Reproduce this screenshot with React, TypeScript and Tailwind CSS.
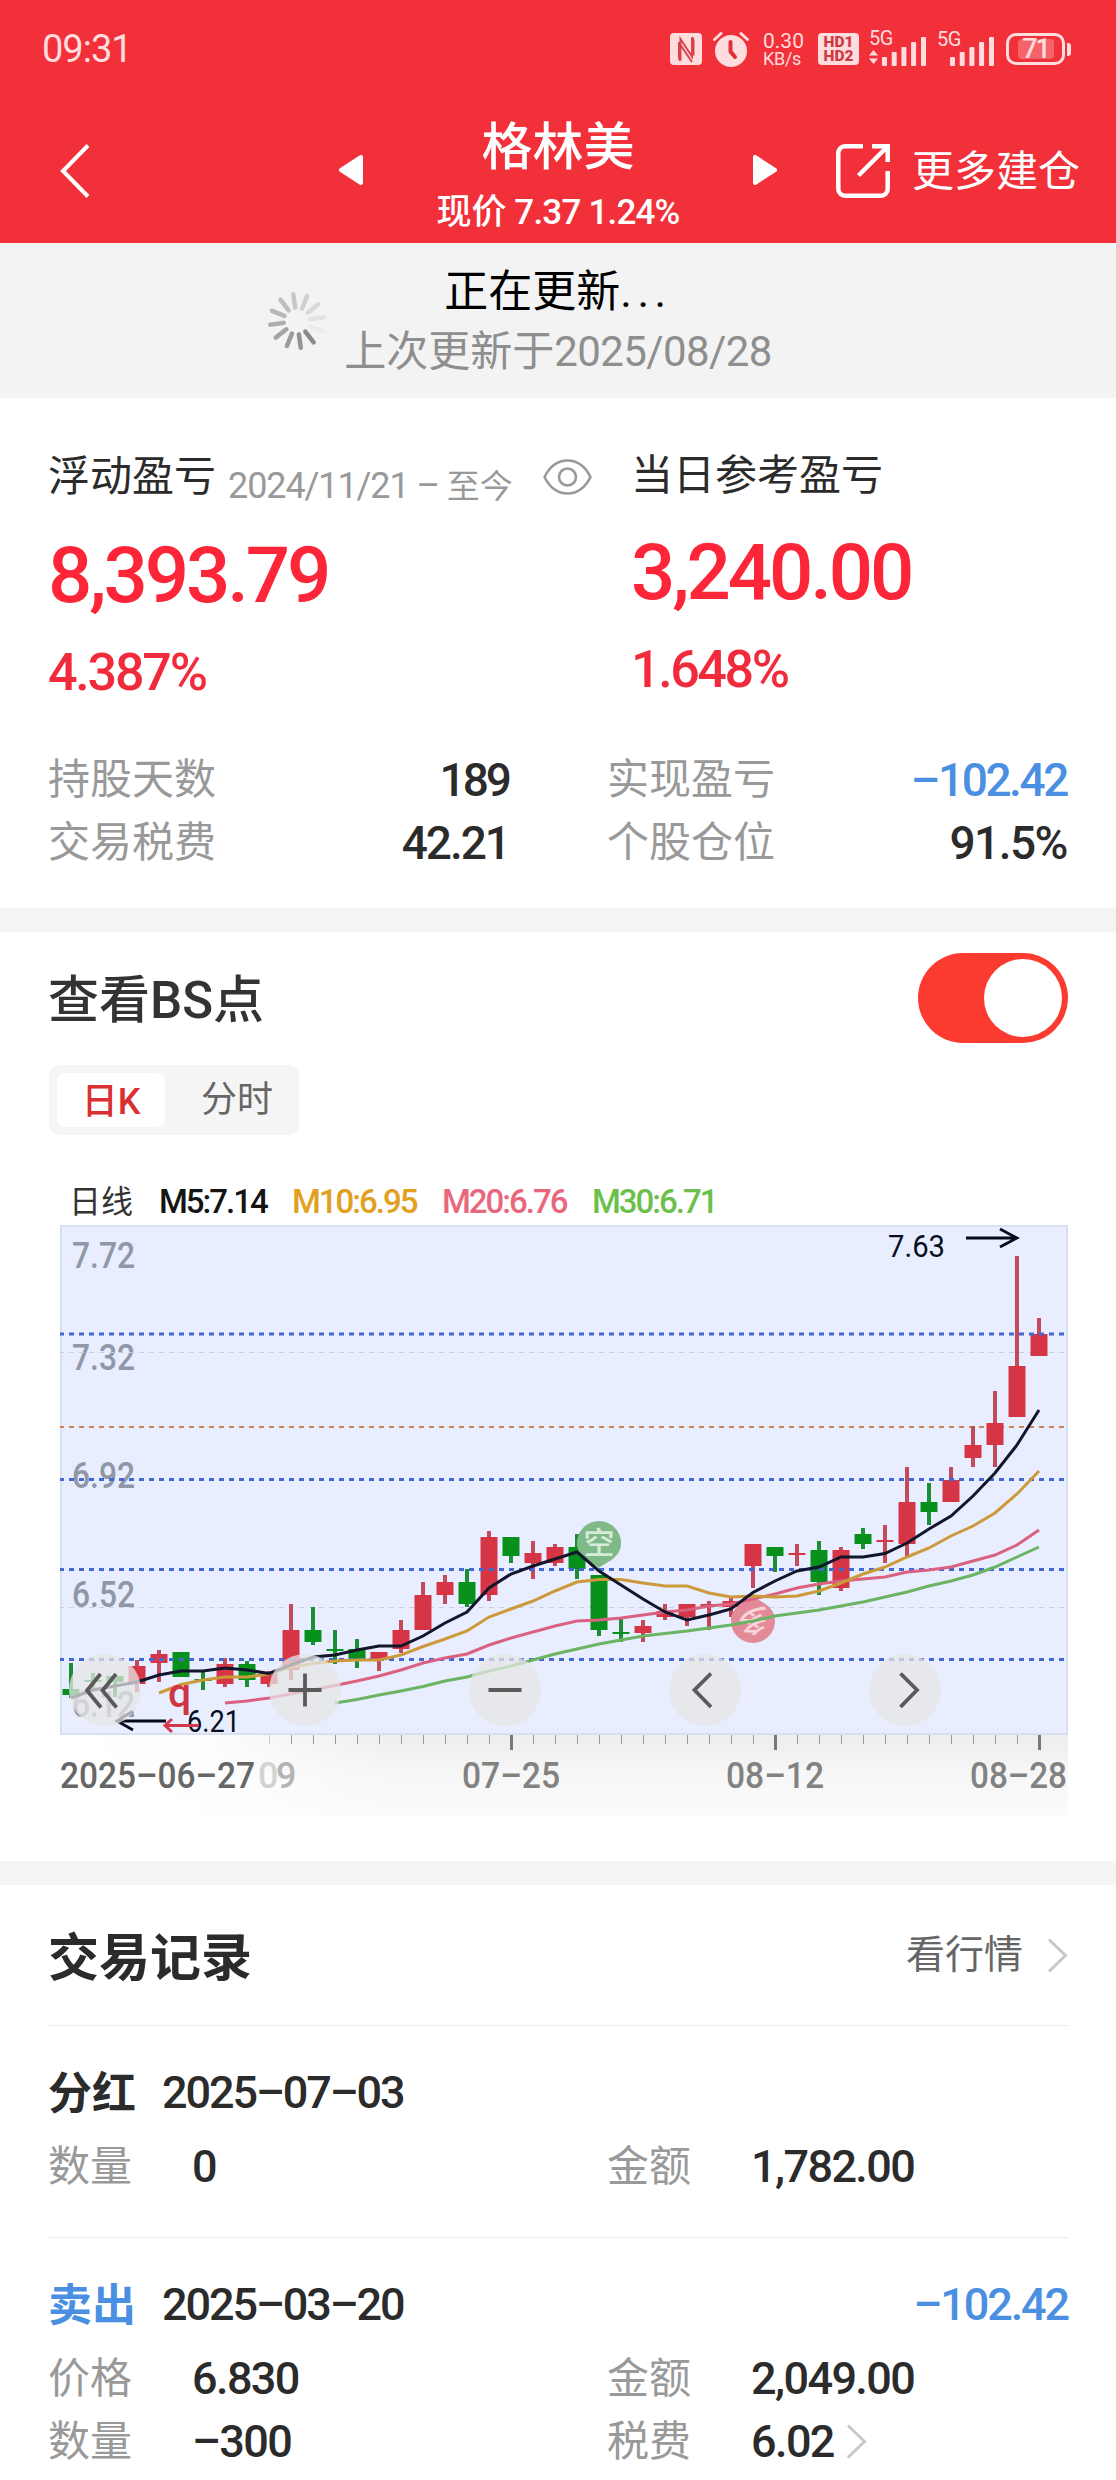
import React, { useState } from "react";
import clsx from "clsx";

type Candle = [number, number, number, number, "r" | "g"];

// x distance between two candles, and x of the first one
const STEP = 22;
const START = 71;

// high, body top, body bottom, low
const candles: Candle[] = [
  [1663, 1689, 1695, 1698, "g"],
  [1673, 1680, 1682, 1689, "g"],
  [1676, 1676, 1682, 1697, "g"],
  [1660, 1666, 1684, 1692, "r"],
  [1650, 1654, 1663, 1682, "r"],
  [1652, 1652, 1677, 1677, "g"],
  [1672, 1679, 1681, 1690, "g"],
  [1658, 1664, 1684, 1687, "r"],
  [1661, 1664, 1680, 1687, "g"],
  [1671, 1672, 1684, 1687, "r"],
  [1604, 1630, 1670, 1680, "r"],
  [1607, 1630, 1642, 1645, "g"],
  [1630, 1649, 1651, 1664, "g"],
  [1639, 1649, 1660, 1668, "g"],
  [1652, 1652, 1660, 1671, "r"],
  [1620, 1630, 1649, 1653, "r"],
  [1582, 1595, 1630, 1630, "r"],
  [1575, 1582, 1595, 1604, "r"],
  [1569, 1582, 1604, 1607, "g"],
  [1531, 1537, 1595, 1601, "r"],
  [1537, 1537, 1556, 1563, "g"],
  [1541, 1553, 1563, 1579, "r"],
  [1544, 1547, 1563, 1566, "r"],
  [1534, 1547, 1569, 1579, "g"],
  [1575, 1575, 1630, 1636, "g"],
  [1619, 1632, 1634, 1642, "g"],
  [1620, 1626, 1633, 1642, "r"],
  [1604, 1611, 1617, 1620, "r"],
  [1604, 1604, 1617, 1626, "r"],
  [1601, 1604, 1606, 1630, "r"],
  [1598, 1601, 1607, 1617, "r"],
  [1544, 1544, 1566, 1588, "r"],
  [1547, 1547, 1556, 1572, "g"],
  [1544, 1553, 1555, 1566, "r"],
  [1541, 1550, 1582, 1595, "g"],
  [1547, 1550, 1588, 1591, "r"],
  [1528, 1534, 1544, 1549, "g"],
  [1525, 1540, 1542, 1563, "r"],
  [1467, 1502, 1544, 1557, "r"],
  [1483, 1502, 1512, 1525, "g"],
  [1467, 1480, 1502, 1502, "r"],
  [1426, 1445, 1458, 1467, "r"],
  [1391, 1423, 1445, 1467, "r"],
  [1256, 1366, 1417, 1417, "r"],
  [1318, 1334, 1356, 1356, "r"],
];

const averages = [
  {
    name: "M30",
    color: "#6ab463",
    first: 12,
    values: [
      1703, 1699.5, 1695, 1691, 1686.5, 1681, 1677, 1671, 1666, 1660, 1654, 1649,
      1644, 1640, 1636, 1633.5, 1631, 1628, 1625, 1621, 1616, 1613, 1610, 1606,
      1602, 1597, 1592, 1586, 1581, 1575, 1567, 1557, 1547,
    ],
  },
  {
    name: "M20",
    color: "#db6180",
    first: 7,
    values: [
      1703, 1701, 1698, 1694, 1690, 1685.5, 1681, 1676, 1670, 1663, 1658, 1654,
      1645, 1638, 1632, 1626, 1621, 1620, 1618, 1615, 1612, 1610, 1606, 1604,
      1599, 1594, 1588, 1584, 1581, 1579, 1577, 1572, 1570, 1567, 1561, 1555,
      1545, 1530,
    ],
  },
  {
    name: "M10",
    color: "#cd9a3b",
    first: 4,
    values: [
      1693, 1684.5, 1680, 1677, 1677, 1674, 1667, 1663.5, 1661, 1660, 1660, 1655,
      1646.5, 1639, 1631, 1617, 1609, 1601, 1591, 1582, 1579.5, 1579.5, 1583,
      1586, 1586, 1593, 1597, 1596, 1597, 1596, 1591, 1583, 1574, 1567, 1557,
      1548, 1536, 1526, 1513, 1494, 1471,
    ],
  },
  {
    name: "M5",
    color: "#12152b",
    first: 0,
    values: [
      1698, 1690, 1686, 1682, 1675, 1671, 1671, 1668, 1670, 1673.5, 1665, 1657,
      1655, 1650, 1646, 1646, 1636, 1623, 1612, 1588, 1574, 1566, 1559, 1552,
      1571, 1585, 1599, 1612, 1620, 1615, 1609, 1592.5, 1581, 1571, 1567, 1557,
      1557, 1553.5, 1543, 1529, 1516, 1496, 1473, 1445, 1410,
    ],
  },
];

const priceLabels = [
  { text: "7.72", y: 1268 },
  { text: "7.32", y: 1370 },
  { text: "6.92", y: 1488 },
  { text: "6.52", y: 1607 },
  { text: "6.12", y: 1717 },
];

const legend = [
  { text: "M5:7.14", className: "w-[133px] text-[#141414]" },
  { text: "M10:6.95", className: "w-[150px] text-[#e0a020]" },
  { text: "M20:6.76", className: "w-[150px] text-[#e8677d]" },
  { text: "M30:6.71", className: "text-[#6cbf4b]" },
];

const SignalBars = () => (
  <svg width="45" height="30" viewBox="0 0 45 30" fill="currentColor">
    <rect x="0" y="20" width="5" height="9" rx="1" />
    <rect x="9.7" y="15" width="5" height="14" rx="1" />
    <rect x="19.4" y="10" width="5" height="19" rx="1" />
    <rect x="29.1" y="5" width="5" height="24" rx="1" />
    <rect x="39" y="0" width="5" height="29" rx="1" />
  </svg>
);

function StatusBar() {
  return (
    <div className="flex h-[98px] items-center pl-[42px] pr-[45px] text-[#ffdcde]">
      <span className="text-[38px] leading-none tracking-[-1px]">09:31</span>
      <svg className="ml-auto" width="32" height="32" viewBox="0 0 32 32">
        <rect width="32" height="32" rx="4" fill="currentColor" />
        <path
          d="M10.500 27.500V6l11.500 17.500V4.500M10.500 27.500c-1-.5-1.500-2-1.500-4V9M22 4.500c1 .5 1.500 2 1.500 4v14M10.500 12 22 29"
          fill="none"
          stroke="#d8434b"
          strokeWidth="2"
        />
      </svg>
      <svg className="ml-[11px]" width="36" height="36" viewBox="0 0 36 36">
        <circle cx="18" cy="20" r="16" fill="currentColor" />
        <path d="M1.500 8.500 8 2.500M34.500 8.500 28 2.500" stroke="currentColor" strokeWidth="3" strokeLinecap="round" />
        <path d="M17.500 11v9.500l4.500 5.500" fill="none" stroke="#e0303a" strokeWidth="4" strokeLinecap="round" />
      </svg>
      <div className="ml-[14px] flex w-[42px] flex-col pt-[2px] leading-[18px]">
        <span className="text-[21px]">0.30</span>
        <span className="text-[18px] tracking-[-0.3px]">KB/s</span>
      </div>
      <div className="ml-[13px] flex h-[32px] w-[41px] flex-col items-center justify-center rounded-[4px] bg-[#ffdcde] text-[15.5px] leading-[14px] font-black text-[#cf3b44]">
        <span>HD1</span>
        <span>HD2</span>
      </div>
      <div className="ml-[10px] flex h-[36px] items-end">
        <div className="flex w-[13px] flex-col text-[20px] leading-[16px]">
          <span className="tracking-[-0.5px]">5G</span>
          <svg className="mt-[4px] mb-[3px]" width="9" height="14" viewBox="0 0 9 14" fill="currentColor">
            <path d="M4.500 0 9 5.500H0zM4.500 14 9 8.500H0z" />
          </svg>
        </div>
        <SignalBars />
      </div>
      <div className="ml-[10px] flex h-[36px] items-end">
        <div className="flex h-full w-[13px] flex-col text-[20px] leading-[16px]">
          <span className="tracking-[-0.5px]">5G</span>
        </div>
        <SignalBars />
      </div>
      <div className="ml-[11px] flex h-[32px] w-[59px] items-center justify-center rounded-[10px] border-[3px] border-[#ffdcde]">
        <div className="flex h-[20px] w-[36px] items-center justify-center rounded-[4px] bg-[#f5646b] text-[27px] leading-none font-medium tracking-[-2px]">
          71
        </div>
      </div>
      <div className="ml-[2px] h-[13px] w-[4px] rounded-r-[3px] bg-[#ffdcde]" />
    </div>
  );
}

function NavBar() {
  return (
    <div className="flex h-[145px] items-start pl-[60px] pr-[36px] text-white">
      <svg className="mt-[46px]" width="30" height="54" viewBox="0 0 30 54" fill="none" stroke="currentColor" strokeWidth="4">
        <path d="M28 1.500 3 27l25 25.500" />
      </svg>
      <svg className="mt-[57px] ml-[249px]" width="24" height="30" viewBox="0 0 24 30" fill="currentColor" stroke="currentColor" strokeWidth="4" strokeLinejoin="round">
        <path d="M22 2v26L2 15z" />
      </svg>
      <div className="mt-[18px] flex w-[390px] flex-col items-center">
        <span className="text-[51px] leading-[64px] font-medium">格林美</span>
        <span className="mt-[1px] text-[35px] leading-[64px] font-medium tracking-[-0.8px] whitespace-pre">
          <span className="tracking-normal">现价</span>
          {" 7.37 1.24%"}
        </span>
      </div>
      <svg className="mt-[57px]" width="24" height="30" viewBox="0 0 24 30" fill="currentColor" stroke="currentColor" strokeWidth="4" strokeLinejoin="round">
        <path d="M2 2v26l20-13z" />
      </svg>
      <svg className="mt-[46px] ml-auto" width="54" height="54" viewBox="0 0 54 54" fill="none" stroke="currentColor" strokeWidth="4.500">
        <path d="M27 2.300H9a6.700 6.700 0 0 0-6.700 6.700v36A6.700 6.700 0 0 0 9 51.700h36a6.700 6.700 0 0 0 6.700-6.700V27M36 2.300h15.700V18M51 3 22.500 31.500" />
      </svg>
      <span className="ml-[22px] mt-[42px] text-[42px] leading-[64px]">更多建仓</span>
    </div>
  );
}

function Spinner() {
  return (
    <svg width="60" height="60" viewBox="-30 -30 60 60" stroke="#8a8a8a" strokeWidth="4.500" strokeLinecap="round">
      {Array.from({ length: 12 }, (_, i) => (
        <line
          key={i}
          x1="0"
          y1="-13.500"
          x2="0"
          y2="-27"
          opacity={1 - i * 0.085}
          transform={`rotate(${142 + i * 30})`}
        />
      ))}
    </svg>
  );
}

function RefreshPanel() {
  return (
    <div className="flex h-[155px] bg-[#f3f3f3] pl-[267px]">
      <div className="mt-[48px]">
        <Spinner />
      </div>
      <div className="ml-[16px] flex w-[430px] flex-col items-center pt-[20px]">
        <span className="text-[44px] leading-[58px] text-black">
          正在更新<span className="tracking-[5.500px]">...</span>
        </span>
        <span className="mt-[1px] text-[42px] leading-[60px] tracking-[-0.600px] whitespace-nowrap text-[#8e8e8e]">
          <span className="tracking-normal">上次更新于</span>2025/08/28
        </span>
      </div>
    </div>
  );
}

const Stat = ({ label, value, className }: { label: string; value: string; className?: string }) => (
  <div className="flex h-[63px] items-center justify-between">
    <span className="text-[42px] leading-none text-[#999]">{label}</span>
    <span className={clsx("text-[46px] leading-none font-medium", className ?? "tracking-[-2px]")}>{value}</span>
  </div>
);

function Summary() {
  const [visible, setVisible] = useState(true);

  return (
    <section className="h-[510px] px-[48px] pt-[48px] text-[#2b2b2b]">
      <div className="flex">
        <div className="w-[583px]">
          <div className="flex h-[62px] items-center">
            <span className="text-[42px] leading-none">浮动盈亏</span>
            <span className="mt-[17px] ml-[12px] text-[36px] leading-none tracking-[-1.100px] whitespace-pre text-[#999]">
              {"2024/11/21 – "}
              <span className="text-[33px] tracking-normal">至今</span>
            </span>
            <button className="ml-auto mr-[39px]" onClick={() => setVisible(!visible)}>
              <svg width="49" height="36" viewBox="0 0 49 36" fill="none" stroke="#999" strokeWidth="2.600">
                <path d="M1.500 18C7 7 15 1.500 24.500 1.500S42 7 47.500 18C42 29 34 34.500 24.500 34.500S7 29 1.500 18z" />
                <circle cx="24.500" cy="18" r="8.500" />
              </svg>
            </button>
          </div>
          <div className="mt-[21px] text-[78px] leading-[94px] font-medium tracking-[-3.100px] text-[#fc2638]">
            {visible ? "8,393.79" : "****"}
          </div>
          <div className="mt-[18px] text-[52px] leading-[64px] font-medium tracking-[-2.200px] text-[#f12b3b]">4.387%</div>
        </div>
        <div>
          <div className="flex h-[60px] items-center">
            <span className="text-[42px] leading-none">当日参考盈亏</span>
          </div>
          <div className="mt-[20px] text-[78px] leading-[94px] font-medium tracking-[-3.100px] text-[#fc2638]">
            {visible ? "3,240.00" : "****"}
          </div>
          <div className="mt-[18px] text-[52px] leading-[64px] font-medium tracking-[-2.400px] text-[#f12b3b]">1.648%</div>
        </div>
      </div>
      <div className="mt-[43px] grid grid-cols-[461px_460px] gap-x-[98px]">
        <Stat label="持股天数" value="189" className="tracking-[-3px]" />
        <Stat label="实现盈亏" value="–102.42" className="tracking-[-2.400px] text-[#4a8fe2]" />
        <Stat label="交易税费" value="42.21" />
        <Stat label="个股仓位" value="91.5%" className="tracking-[-1.500px]" />
      </div>
    </section>
  );
}

const Dashed = ({ y, color, width }: { y: number; color: string; width: number }) => (
  <line x1="59" x2="1066" y1={y} y2={y} stroke={color} strokeWidth={width} strokeDasharray="5 5" />
);

function KLineChart() {
  return (
    <svg className="block" width="1008" height="592" viewBox="60 1225 1008 592">
      <defs>
        <linearGradient id="axisDown" x1="0" y1="0" x2="0" y2="1">
          <stop offset="0" stopColor="#ededed" />
          <stop offset="0.5" stopColor="#f7f7f7" />
          <stop offset="1" stopColor="#fbfbfb" />
        </linearGradient>
        <linearGradient id="axisFade" x1="0" y1="0" x2="1" y2="0">
          <stop offset="0" stopColor="#fff" />
          <stop offset="0.14" stopColor="#fff" stopOpacity="0.9" />
          <stop offset="0.34" stopColor="#fff" stopOpacity="0" />
        </linearGradient>
      </defs>
      <rect x="61" y="1226" width="1006" height="508" fill="#e8eeff" stroke="#d8dfed" strokeWidth="2" />
      <rect x="60" y="1735" width="1008" height="82" fill="url(#axisDown)" />
      <rect x="60" y="1735" width="1008" height="82" fill="url(#axisFade)" />

      {priceLabels.map((label) => (
        <text key={label.text} x="72" y={label.y} fontSize="36" fontWeight="500" fill="#9097a6" textLength="63" lengthAdjust="spacingAndGlyphs">
          {label.text}
        </text>
      ))}

      <Dashed y={1352.5} color="#c9cedb" width={1} />
      <Dashed y={1607.5} color="#c9cedb" width={1} />
      <Dashed y={1427} color="#d08352" width={2} />

      {candles.map(([high, top, bottom, low, kind], i) => {
        const x = START + i * STEP;
        return (
          <g key={i}>
            <rect x={x - 2} y={high} width="4" height={low - high} fill={kind === "r" ? "#c24a5a" : "#1c8f34"} />
            <rect x={x - 8.5} y={top} width="17" height={bottom - top} fill={kind === "r" ? "#d53545" : "#07911c"} />
          </g>
        );
      })}

      <Dashed y={1334} color="#4468d2" width={3} />
      <Dashed y={1479.5} color="#4468d2" width={3} />
      <Dashed y={1569.5} color="#4468d2" width={3} />
      <Dashed y={1659.5} color="#4468d2" width={3} />

      {/* short / long markers */}
      <path d="M599 1568c-5-5-22-9-22-25a22 22 0 0 1 44 0c0 16-17 20-22 25z" fill="#7fb988" />
      <text x="599" y="1554" fontSize="31" fontWeight="500" textAnchor="middle" fill="#d5ecd8">空</text>
      <path d="M753 1596c-5 5-22 9-22 25a22 22 0 0 0 44 0c0-16-17-20-22-25z" fill="#e38a99" />
      <text x="753" y="1632" fontSize="30" fontWeight="500" textAnchor="middle" fill="#f8d3d9" transform="rotate(180 753 1621)">多</text>

      {averages.map((line) => (
        <polyline
          key={line.name}
          points={line.values.map((y, i) => `${START + (line.first + i) * STEP},${y}`).join(" ")}
          fill="none"
          stroke={line.color}
          strokeWidth="3"
        />
      ))}

      <text x="888" y="1257" fontSize="31" fill="#0a0d1e" textLength="57" lengthAdjust="spacingAndGlyphs">7.63</text>
      <path d="M966 1238h50M1000 1229l17 9-17 9" fill="none" stroke="#060a1c" strokeWidth="2.800" />
      <text x="187" y="1732" fontSize="31" fill="#0a0d1e" textLength="53" lengthAdjust="spacingAndGlyphs">6.21</text>
      <path d="M166 1721h-48M133 1711l-16 10 16 9" fill="none" stroke="#060a1c" strokeWidth="2.800" />
      <text x="168" y="1707" fontSize="41" fontWeight="500" fill="#cf3545">q</text>
      <path d="M199 1725.500h-33M172 1719l-7 6.500 7 6.500" fill="none" stroke="#d53a4b" strokeWidth="3" />

      {candles.map((_, i) => {
        const x = START + i * STEP;
        if (i < 9) return null;
        const major = i % 12 === 8;
        return (
          <rect
            key={i}
            x={major ? x - 1 : x}
            y="1735"
            width={major ? 3 : 1}
            height={major ? 15 : 9}
            fill={major ? "#777" : i === 9 ? "#ccc" : "#999"}
          />
        );
      })}

      <g fontSize="36" fontWeight="500" fill="#828282">
        <text x="60" y="1788" fill="#666" textLength="195" lengthAdjust="spacingAndGlyphs">2025–06–27</text>
        <text x="258" y="1788" fill="#d3d3d3">0</text>
        <text x="276" y="1788" fill="#b4b4b4">9</text>
        <text x="462" y="1788" textLength="98" lengthAdjust="spacingAndGlyphs">07–25</text>
        <text x="726" y="1788" textLength="98" lengthAdjust="spacingAndGlyphs">08–12</text>
        <text x="970" y="1788" textLength="97" lengthAdjust="spacingAndGlyphs">08–28</text>
      </g>
    </svg>
  );
}

const controls = [
  { name: "first", path: "M31.500 20 18 36.500l14 17M47 20 33.500 36.500l14 17" },
  { name: "zoom in", path: "M36 19.500v33M19.500 36h33" },
  { name: "zoom out", path: "M19.500 36h33" },
  { name: "previous", path: "M42 19.500 25.500 36 42 53" },
  { name: "next", path: "M31.500 19.500 48 36 31.500 53" },
];

function ChartSection() {
  const [showPoints, setShowPoints] = useState(true);

  return (
    <section className="h-[929px] pt-[21px]">
      <div className="flex h-[90px] items-center justify-between px-[48px]">
        <h2 className="pt-[5px] text-[51px] leading-none font-medium text-[#333]">查看BS点</h2>
        <button
          className={clsx("flex h-[90px] w-[150px] items-center rounded-full px-[6px]", showPoints ? "justify-end bg-[#fb3b30]" : "bg-[#ddd]")}
          onClick={() => setShowPoints(!showPoints)}
        >
          <span className="size-[78px] rounded-full bg-white" />
        </button>
      </div>
      <div className="mt-[22px] ml-[49px] flex h-[70px] w-[250px] items-center rounded-[10px] bg-[#f5f5f5] p-[8px] text-[36px] leading-none">
        <span className="flex h-[54px] w-[108px] items-center justify-center rounded-[8px] bg-white pt-[4px] font-medium text-[#da3031]">日K</span>
        <span className="ml-[36px] text-[#666]">分时</span>
      </div>
      <div className="mt-[44px] mb-[1px] flex h-[45px] items-center pl-[69px] text-[33px] leading-none font-medium tracking-[-2px]">
        <span className="w-[90px] text-[32px] font-normal tracking-normal text-[#333]">日线</span>
        {legend.map((item) => (
          <span key={item.text} className={item.className}>{item.text}</span>
        ))}
      </div>
      <div className="relative ml-[60px] w-[1008px]">
        <KLineChart />
        <div className="absolute top-[429px] left-[9px] flex gap-[128px]">
          {controls.map((control) => (
            <button key={control.name} aria-label={control.name} className="size-[72px] rounded-full bg-[#e6e6e6]/75">
              <svg width="72" height="72" viewBox="0 0 72 72" fill="none" stroke="#5a5a5a" strokeWidth="3.800">
                <path d={control.path} />
              </svg>
            </button>
          ))}
        </div>
      </div>
    </section>
  );
}

const Chevron = ({ className }: { className?: string }) => (
  <svg className={className} width="21" height="35" viewBox="0 0 21 35" fill="none" stroke="#c8c8c8" strokeWidth="3">
    <path d="M2 1.500 18.500 17.500 2 33.500" />
  </svg>
);

const Field = ({ label, value, link }: { label: string; value: string; link?: boolean }) => (
  <div className="flex h-[63px] items-center">
    <span className="w-[144px] text-[42px] leading-none text-[#999]">{label}</span>
    <span className="text-[45px] leading-none font-medium tracking-[-1.600px] text-[#2b2b2b]">{value}</span>
    {link && <Chevron className="ml-[12px]" />}
  </div>
);

type Trade = {
  kind: string;
  date: string;
  profit?: string;
  fields: { label: string; value: string; link?: boolean }[];
};

const trades: Trade[] = [
  {
    kind: "分红",
    date: "2025–07–03",
    fields: [
      { label: "数量", value: "0" },
      { label: "金额", value: "1,782.00" },
    ],
  },
  {
    kind: "卖出",
    date: "2025–03–20",
    profit: "–102.42",
    fields: [
      { label: "价格", value: "6.830" },
      { label: "金额", value: "2,049.00" },
      { label: "数量", value: "–300" },
      { label: "税费", value: "6.02", link: true },
    ],
  },
];

function TradeHistory() {
  return (
    <section className="h-[595px] overflow-hidden px-[48px] text-[#2b2b2b]">
      <div className="flex h-[140px] items-center">
        <h2 className="pt-[7px] text-[51px] leading-none font-bold">交易记录</h2>
        <span className="ml-auto mr-[24px] text-[39px] leading-none text-[#666]">看行情</span>
        <Chevron />
      </div>
      {trades.map((trade) => (
        <div key={trade.kind} className="border-t border-[#ececec] pt-[28px] pb-[39px]">
          <div className="mb-[5px] flex h-[76px] items-center">
            <span className={clsx("w-[114px] pt-[4px] text-[44px] leading-none font-bold", trade.profit && "text-[#4a8fe2]")}>{trade.kind}</span>
            <span className="text-[45px] leading-none font-medium tracking-[-2.100px]">{trade.date}</span>
            <span className="ml-auto text-[45px] leading-none font-medium tracking-[-2.100px] text-[#4a8fe2]">{trade.profit}</span>
          </div>
          <div className="grid grid-cols-[559px_461px]">
            {trade.fields.map((field) => (
              <Field key={field.label} {...field} />
            ))}
          </div>
        </div>
      ))}
    </section>
  );
}

export default function App() {
  return (
    <main className="h-[2480px] w-[1116px] overflow-hidden bg-white font-['Roboto','Noto_Sans_CJK_SC',sans-serif]">
      <header className="h-[243px] bg-[#f13039]">
        <StatusBar />
        <NavBar />
      </header>
      <RefreshPanel />
      <Summary />
      <div className="h-[24px] bg-[#f4f4f4]" />
      <ChartSection />
      <div className="h-[24px] bg-[#f4f4f4]" />
      <TradeHistory />
    </main>
  );
}
